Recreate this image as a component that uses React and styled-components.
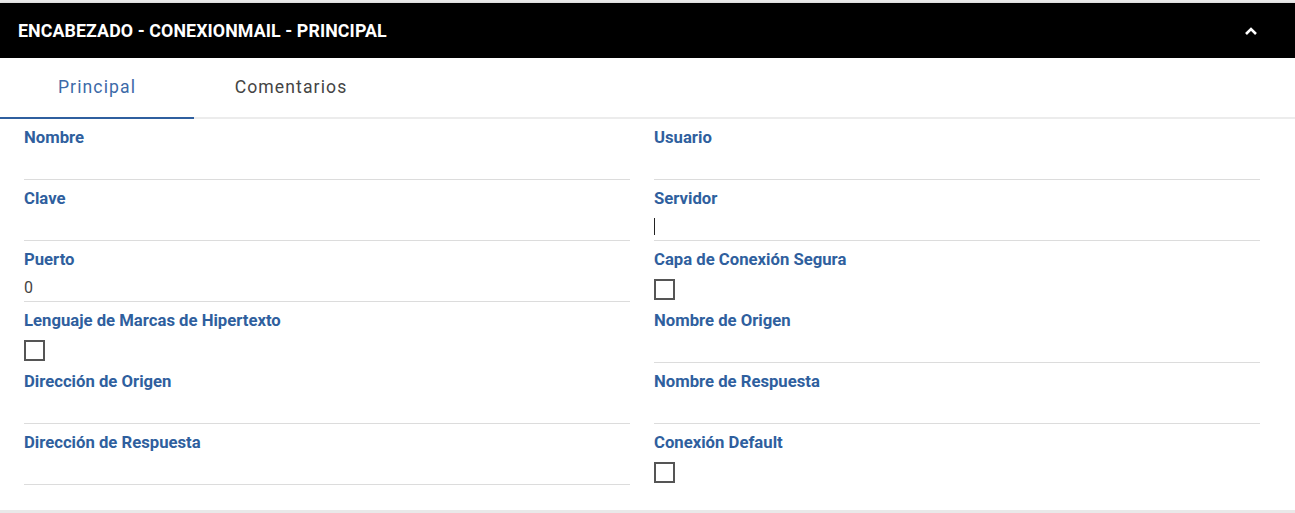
import React from "react";
import styled, { createGlobalStyle } from "styled-components";

const GlobalStyle = createGlobalStyle`
  html, body {
    margin: 0;
    padding: 0;
    background: #e9e9e9;
    font-family: Roboto, "Noto Sans", Arial, sans-serif;
  }
  * { box-sizing: border-box; }
`;

const Card = styled.section`
  margin-top: 3px;
  height: 507px;
  background: #ffffff;
  box-shadow: 0 1px 3px rgba(0, 0, 0, 0.25);
  display: flex;
  flex-direction: column;
`;

const Header = styled.header`
  height: 55px;
  background: #000000;
  color: #ffffff;
  display: flex;
  align-items: center;
  justify-content: space-between;
  padding: 0 37px 0 18px;
`;

const Title = styled.h2`
  margin: 0;
  font-size: 17.8px;
  font-weight: 700;
  letter-spacing: 0.1px;
`;

const Toggle = styled.button`
  border: 0;
  background: transparent;
  padding: 0;
  width: 14px;
  height: 14px;
  display: flex;
  align-items: center;
  justify-content: center;
  cursor: pointer;
`;

const TabBar = styled.nav`
  display: flex;
  height: 61px;
  border-bottom: 2px solid #ececec;
`;

const Tab = styled.div`
  width: 194px;
  display: flex;
  align-items: center;
  justify-content: center;
  font-size: 17.6px;
  letter-spacing: 1.1px;
  color: ${(p) => (p.$active ? "#3c6aa8" : "#444444")};
  border-bottom: 2px solid ${(p) => (p.$active ? "#2f5f9f" : "transparent")};
  margin-bottom: -2px;
  padding-bottom: 2px;
`;

const Form = styled.div`
  display: grid;
  grid-template-columns: 1fr 1fr;
  column-gap: 24px;
  padding: 0 35px 0 24px;
`;

const Field = styled.div`
  height: 61px;
  padding-top: 9px;
  display: flex;
  flex-direction: column;
  border-bottom: 1px solid ${(p) => (p.$plain ? "transparent" : "#dcdcdc")};
`;

const Label = styled.label`
  height: 20px;
  line-height: 20px;
  font-size: 16.7px;
  font-weight: 700;
  color: #2f5f9e;
`;

const InputArea = styled.div`
  flex: 1;
  display: flex;
  align-items: center;
  font-size: 16px;
  color: #444444;
  padding-top: 3px;
`;

const Caret = styled.span`
  display: block;
  width: 1px;
  height: 17px;
  background: #222222;
`;

const Box = styled.span`
  display: block;
  width: 21px;
  height: 21px;
  border: 2px solid #555555;
  margin-top: 4px;
  background: #ffffff;
`;

const fields = [
  { label: "Nombre" },
  { label: "Usuario" },
  { label: "Clave" },
  { label: "Servidor", caret: true },
  { label: "Puerto", value: "0" },
  { label: "Capa de Conexión Segura", check: true },
  { label: "Lenguaje de Marcas de Hipertexto", check: true },
  { label: "Nombre de Origen" },
  { label: "Dirección de Origen" },
  { label: "Nombre de Respuesta" },
  { label: "Dirección de Respuesta" },
  { label: "Conexión Default", check: true },
];

export default function App() {
  return (
    <>
      <GlobalStyle />
      <Card>
        <Header>
          <Title>ENCABEZADO - CONEXIONMAIL - PRINCIPAL</Title>
          <Toggle aria-label="Contraer">
            <svg width="14" height="10" viewBox="0 0 14 10">
              <path
                d="M2 8 L7 3 L12 8"
                fill="none"
                stroke="#ffffff"
                strokeWidth="2.6"
              />
            </svg>
          </Toggle>
        </Header>
        <TabBar>
          <Tab $active>Principal</Tab>
          <Tab>Comentarios</Tab>
        </TabBar>
        <Form>
          {fields.map((f) => (
            <Field key={f.label} $plain={f.check}>
              <Label>{f.label}</Label>
              <InputArea>
                {f.check ? <Box /> : f.caret ? <Caret /> : f.value || null}
              </InputArea>
            </Field>
          ))}
        </Form>
      </Card>
    </>
  );
}
